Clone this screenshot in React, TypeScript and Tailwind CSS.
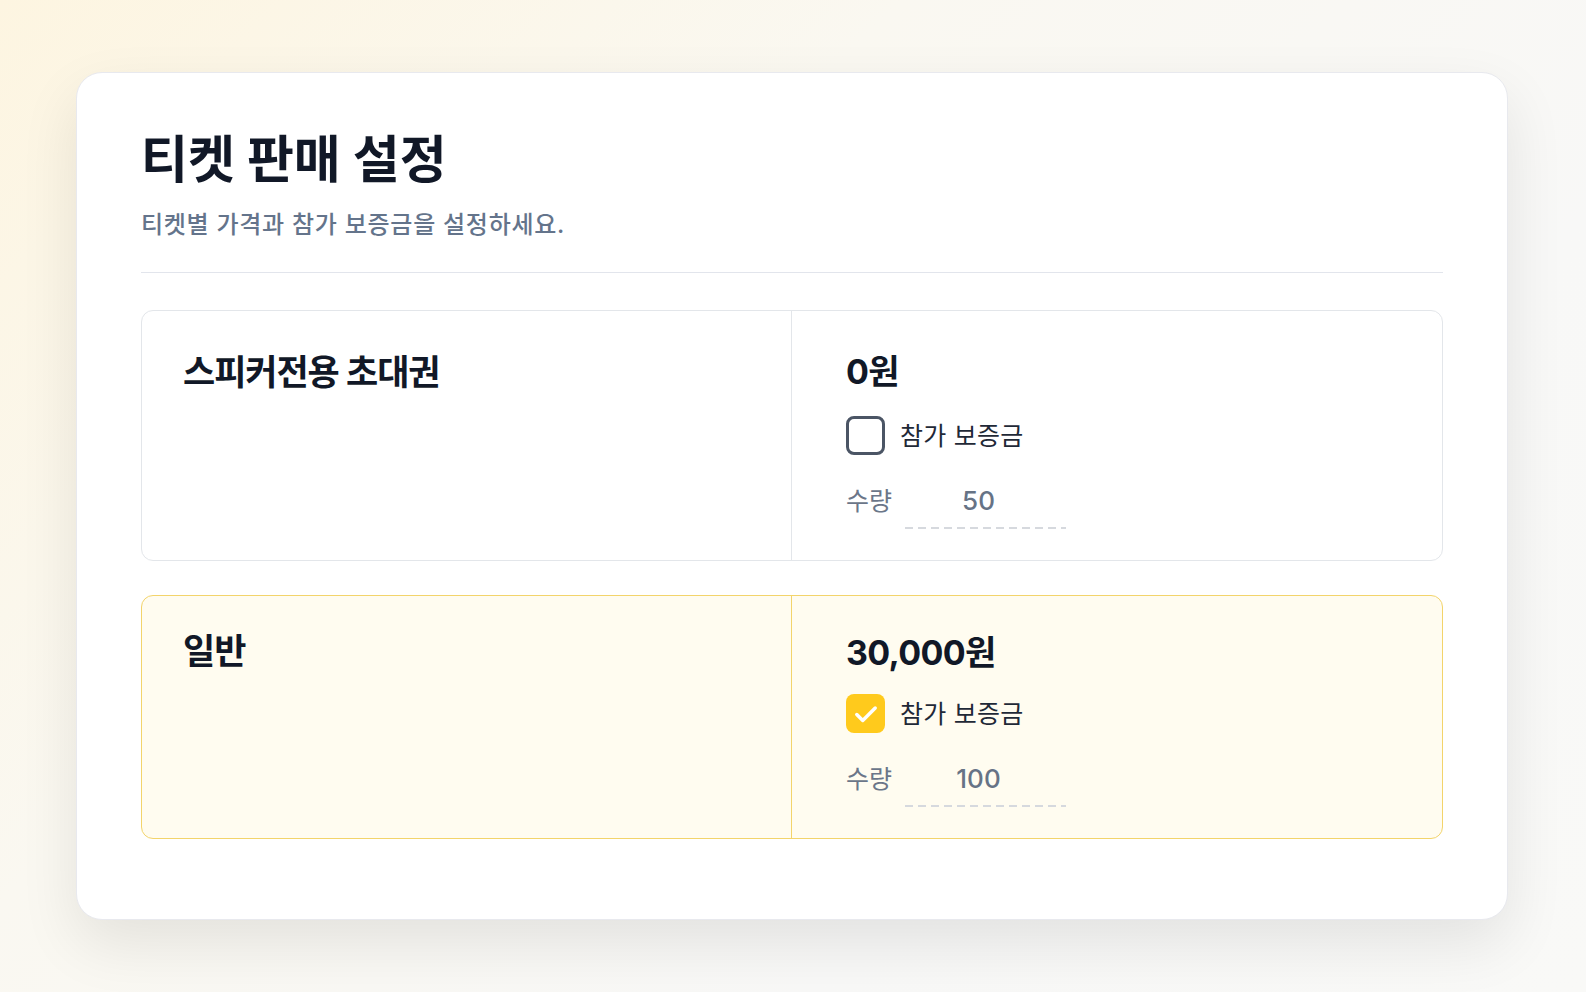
import React from "react";

const font = { fontFamily: 'Inter, "Noto Sans CJK KR", "Noto Sans", sans-serif' };

function Check({ checked }: { checked: boolean }) {
  if (checked) {
    return (
      <div className="w-[39px] h-[39px] rounded-[8px] bg-[#ffca1c] flex items-center justify-center shrink-0">
        <svg width="26" height="26" viewBox="0 0 24 24" fill="none">
          <path d="M3.5 12.5l5.5 5.5L20.5 6.5" stroke="white" strokeWidth="3.2" strokeLinecap="round" strokeLinejoin="round" />
        </svg>
      </div>
    );
  }
  return <div className="w-[39px] h-[39px] rounded-[8px] border-[3px] border-[#4b5565] bg-white shrink-0" />;
}

function Ticket({
  name,
  price,
  checked,
  qty,
  active,
}: {
  name: string;
  price: string;
  checked: boolean;
  qty: string;
  active: boolean;
}) {
  return (
    <div
      className={
        "grid grid-cols-2 rounded-[12px] border " +
        (active ? "border-[#f3d46b] bg-[#fffcf0]" : "border-[#e3e6ea] bg-white")
      }
    >
      <div
        className={
          "pl-[41px] border-r " +
          (active ? "border-[#f3d46b] pt-[33px]" : "border-[#e3e6ea] pt-[39px]")
        }
      >
        <div className="text-[35px] font-bold text-[#111827] leading-[44px] tracking-[-0.03em]">{name}</div>
      </div>
      <div className={"pl-[54px] pb-[31px] " + (active ? "pt-[35px]" : "pt-[39px]")}>
        <div className="text-[34px] font-bold text-[#111827] leading-[44px] tracking-[-0.02em]">{price}</div>
        <div className={"flex items-center gap-[15px] " + (active ? "mt-[19px]" : "mt-[22px]")}>
          <Check checked={checked} />
          <span className="text-[25px] text-[#1f2937] leading-[32px] tracking-[0.01em]">참가 보증금</span>
        </div>
        <div className="flex items-center mt-[30px]">
          <span className="text-[25px] text-[#6b7689] leading-[32px] w-[59px]">수량</span>
          <div className="w-[161px] pr-[14px] text-center text-[26px] font-medium text-[#667386] leading-[32px]">
            {qty}
          </div>
        </div>
        <div className="ml-[59px] mt-[10px] w-[161px] h-[2px] bg-[repeating-linear-gradient(90deg,#d6d9de_0px,#d6d9de_8px,transparent_8px,transparent_13px)]" />
      </div>
    </div>
  );
}

export default function App() {
  return (
    <div
      className="w-[1586px] h-[992px] bg-[linear-gradient(135deg,#fdf5e1_0%,#faf8f1_35%,#f8f8f7_70%,#f9f9f7_100%)] pt-[72px] pl-[76px]"
      style={font}
    >
      <div className="w-[1432px] h-[848px] bg-white rounded-[26px] border border-[#e8e9ee] shadow-[0_24px_60px_rgba(0,0,0,0.09)] px-[64px] pt-[54px]">
        <h1 className="text-[51px] font-bold text-[#111827] leading-[66px]">티켓 판매 설정</h1>
        <p className="text-[24px] font-medium text-[#64748b] leading-[32px] mt-[16px] tracking-[0.03em]">
          티켓별 가격과 참가 보증금을 설정하세요.
        </p>
        <div className="h-px bg-[#e2e5ec] mt-[31px]" />
        <div className="flex flex-col gap-[34px] mt-[37px]">
          <Ticket name="스피커전용 초대권" price="0원" checked={false} qty="50" active={false} />
          <Ticket name="일반" price="30,000원" checked={true} qty="100" active={true} />
        </div>
      </div>
    </div>
  );
}
